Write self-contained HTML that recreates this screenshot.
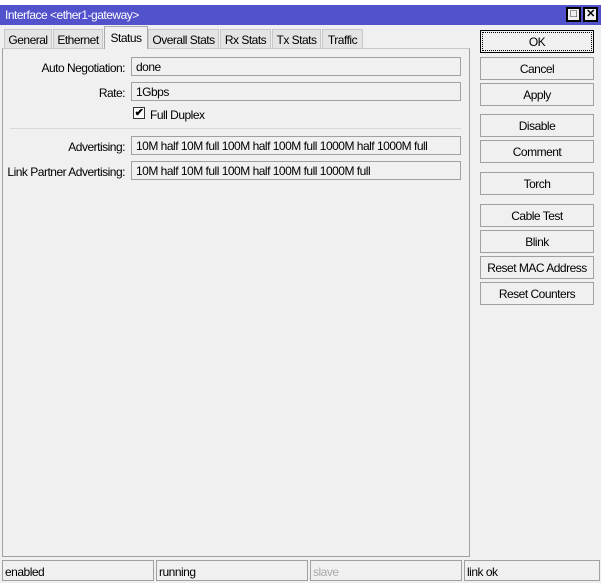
<!DOCTYPE html>
<html><head><style>
*{margin:0;padding:0;box-sizing:border-box}
body{width:601px;height:583px;background:#f0f0f0;font-family:"Liberation Sans",sans-serif;font-size:12px;letter-spacing:-0.5px;color:#000;position:relative;overflow:hidden}
.a{position:absolute}
.title{left:0;top:5px;width:601px;height:20px;background:#5252cc;color:#fff;padding:3px 0 0 5px}
.tb{top:7px;width:15px;height:15px;background:#f0f0f0;border:2px solid #000;font-size:11px;text-align:center;line-height:11px;color:#000;font-weight:bold}
.tab{top:29px;height:20px;border:1px solid #c8c8c8;border-bottom:none;background:#e4e4e4;text-align:center;line-height:20px}
.tab.on{top:26px;height:23px;background:#f0f0f0;border-color:#aaa;line-height:22px;z-index:2}
.panel{left:2px;top:48px;width:468px;height:509px;border:1px solid #a0a0a0;border-top-color:#c8c8c8}
.lbl{text-align:right;width:125px;left:0}
.fld{left:131px;width:330px;height:19px;border:1px solid #a0a0a0;background:#f0f0f0;padding:2px 0 0 4px}
.btn{left:480px;width:114px;height:23px;border:1px solid #a0a0a0;background:#f0f0f0;text-align:center;line-height:22px}
.st{top:560px;height:21px;border:1px solid #a0a0a0;padding:4px 0 0 2px}
</style></head><body>
<div class="a" style="left:0;top:0;width:601px;height:5px;background:#fff"></div>
<div class="a title">Interface &lt;ether1-gateway&gt;</div>
<div class="a tb" style="left:566px">&#9633;</div>
<div class="a tb" style="left:583px">✕</div>
<div class="a tab" style="left:4px;width:48px">General</div>
<div class="a tab" style="left:53px;width:50px">Ethernet</div>
<div class="a tab on" style="left:104px;width:44px">Status</div>
<div class="a tab" style="left:148px;width:71px">Overall Stats</div>
<div class="a tab" style="left:220px;width:51px">Rx Stats</div>
<div class="a tab" style="left:272px;width:49px">Tx Stats</div>
<div class="a tab" style="left:322px;width:41px">Traffic</div>
<div class="a panel"></div>
<div class="a lbl" style="top:61px">Auto Negotiation:</div>
<div class="a fld" style="top:57px">done</div>
<div class="a lbl" style="top:86px">Rate:</div>
<div class="a fld" style="top:82px">1Gbps</div>
<div class="a" style="left:133px;top:107px;width:12px;height:12px;border:1px solid #333;background:#fff;font-size:11px;line-height:10px;text-align:center;font-weight:bold">✔</div>
<div class="a" style="left:150px;top:108px">Full Duplex</div>
<div class="a" style="left:10px;top:128px;width:451px;height:1px;background:#d8d8d8"></div>
<div class="a lbl" style="top:140px">Advertising:</div>
<div class="a fld" style="top:136px">10M half 10M full 100M half 100M full 1000M half 1000M full</div>
<div class="a lbl" style="top:165px">Link Partner Advertising:</div>
<div class="a fld" style="top:161px">10M half 10M full 100M half 100M full 1000M full</div>
<div class="a btn" style="top:30px;border-color:#000;outline:1px dotted #000;outline-offset:-3px">OK</div>
<div class="a btn" style="top:57px">Cancel</div>
<div class="a btn" style="top:83px">Apply</div>
<div class="a btn" style="top:114px">Disable</div>
<div class="a btn" style="top:140px">Comment</div>
<div class="a btn" style="top:172px">Torch</div>
<div class="a btn" style="top:204px">Cable Test</div>
<div class="a btn" style="top:230px">Blink</div>
<div class="a btn" style="top:256px">Reset MAC Address</div>
<div class="a btn" style="top:282px">Reset Counters</div>
<div class="a st" style="left:2px;width:152px">enabled</div>
<div class="a st" style="left:156px;width:152px">running</div>
<div class="a st" style="left:310px;width:152px;color:#aaa">slave</div>
<div class="a st" style="left:464px;width:136px">link ok</div>
</body></html>
